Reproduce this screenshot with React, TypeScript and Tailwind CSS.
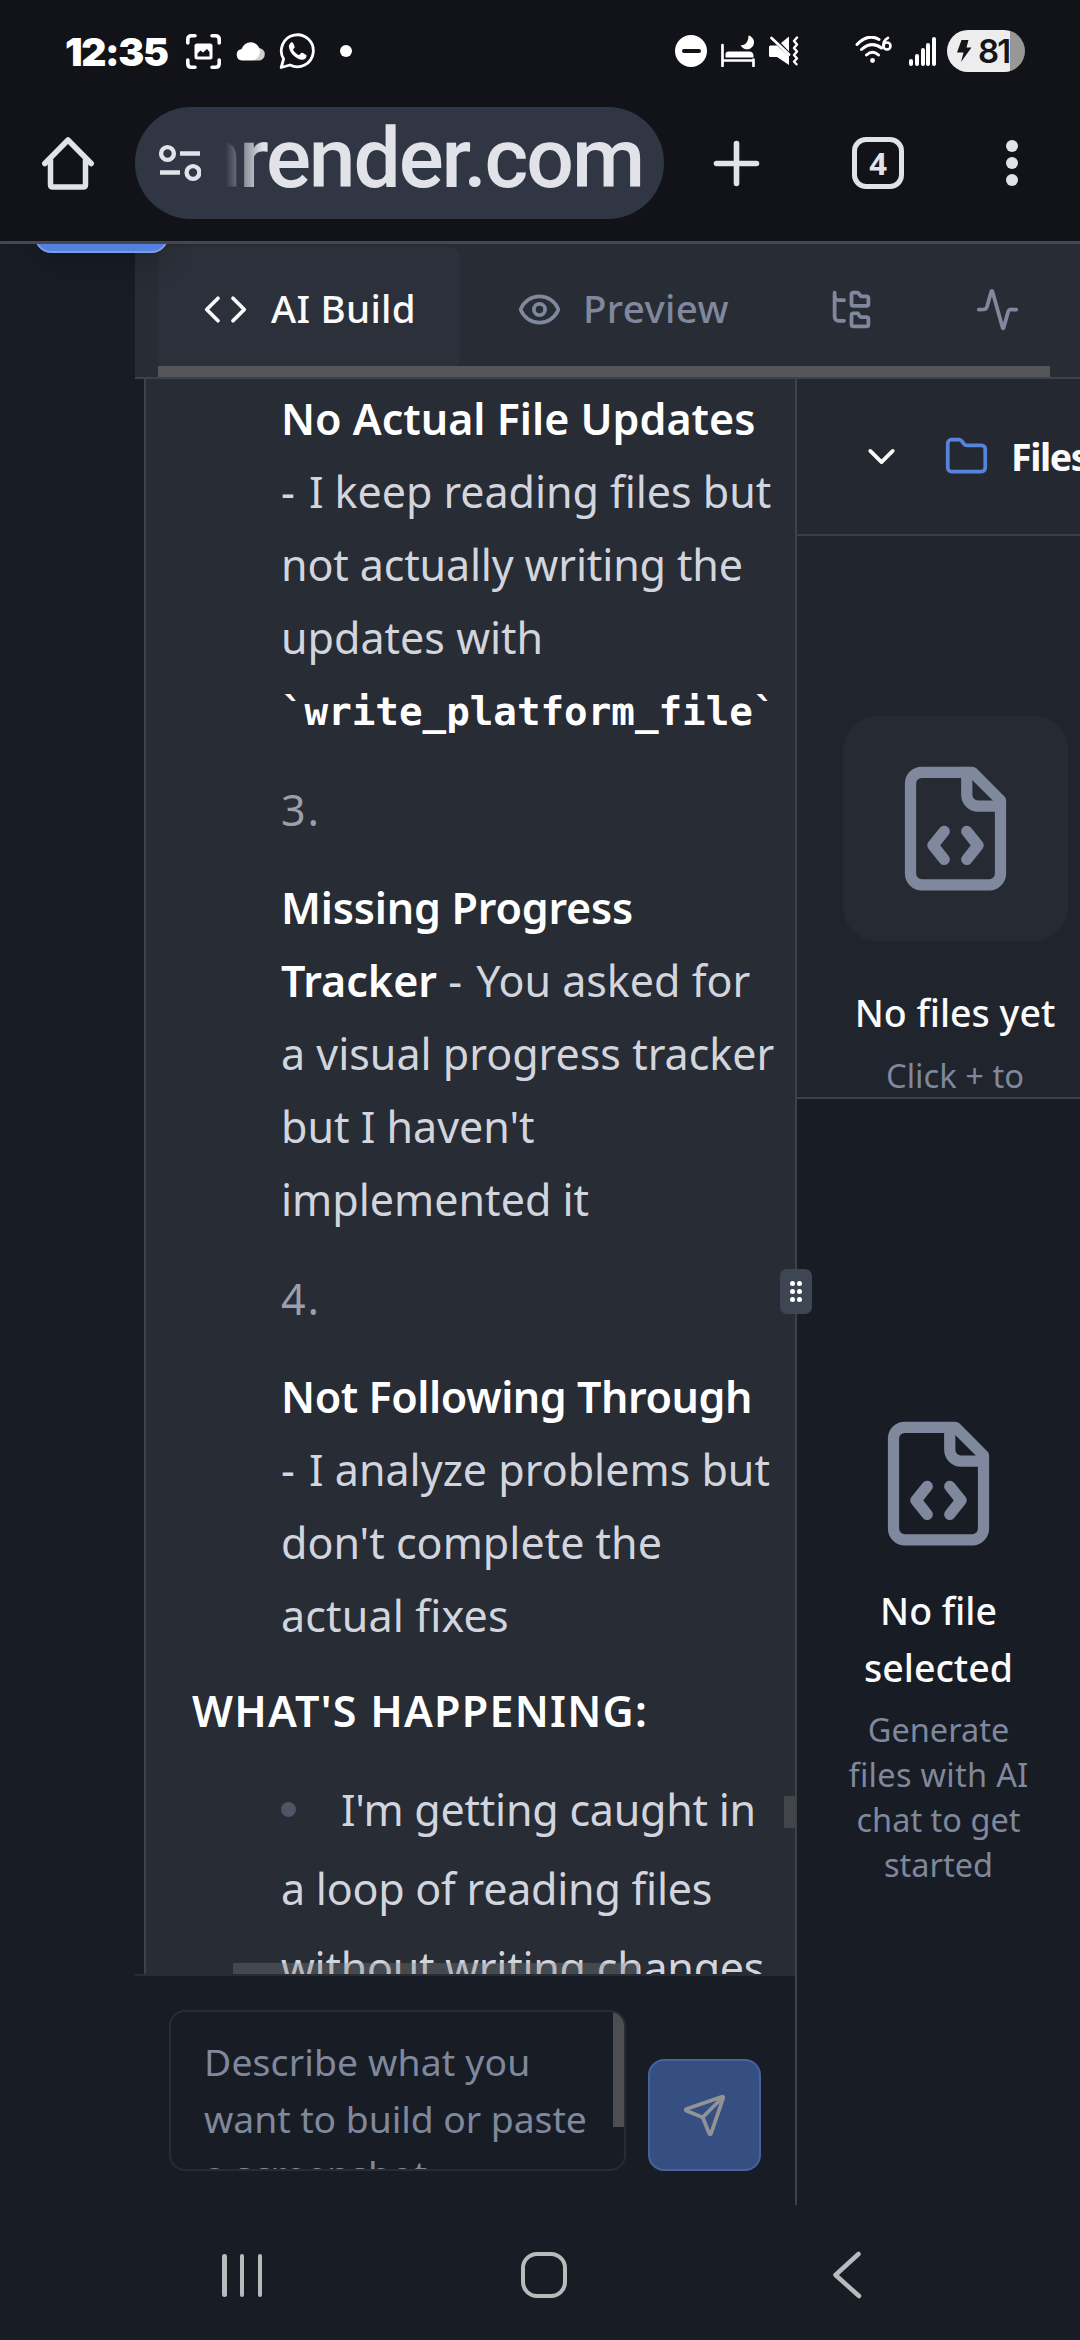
import { Activity, ChevronDown, Code, Eye, Folder, FolderTree, Send } from "lucide-react";

function FileCodeIcon() {
  return (
    <svg width="135" height="135" viewBox="0 0 24 24" fill="none" stroke="#7f889c" strokeWidth="2" strokeLinecap="round" strokeLinejoin="round" className="shrink-0">
      <path d="M10 12.5 8 15l2 2.5" />
      <path d="m14 12.5 2 2.5-2 2.5" />
      <path d="M14 2v4a2 2 0 0 0 2 2h4" />
      <path d="M15 2H6a2 2 0 0 0-2 2v16a2 2 0 0 0 2 2h12a2 2 0 0 0 2-2V7z" />
    </svg>
  );
}

function StatusBar() {
  return (
    <div className="flex h-[102px] shrink-0 items-center text-white">
      <span className="ml-[65px] w-[121px] font-['Inter'] text-[39px] leading-none font-black tracking-[-1.4px]">12:35</span>
      <svg width="35" height="35" viewBox="0 0 35 35" fill="none" stroke="white" strokeWidth="3.6" strokeLinecap="round">
        <path d="M1.8 9V5.5Q1.8 1.8 5.5 1.8H9M26 1.8h3.500q3.700 0 3.700 3.700V9M1.800 26v3.500q0 3.700 3.700 3.700H9M26 33.200h3.500q3.700 0 3.700-3.700V26" />
        <rect x="8.500" y="9.500" width="18" height="16" rx="2.500" fill="white" stroke="none" />
        <path d="M11.500 22.500v-3l3-3 2.500 2 4-3.500 2.500 3v4.500z" fill="#121318" stroke="none" />
      </svg>
      <svg width="30" height="20" viewBox="0 0 30 20" className="ml-[15px]">
        <path d="M18 19.500h4.500a6.300 6.300 0 0 0 0-12.600h-4z" fill="#cfcfcf" />
        <path d="M6 19.500a5.800 5.800 0 0 1-.4-11.500A9.500 9.500 0 0 1 24 9c0 6-3 9-6.500 10.500z" fill="white" />
      </svg>
      <svg width="37" height="38" viewBox="0 0 37 38" fill="none" className="ml-[13px]">
        <path d="M2.200 35.500 4.600 27A16 16 0 1 1 11 33z" stroke="white" strokeWidth="2.800" strokeLinejoin="round" />
        <path d="M13 10.200c-1 0-3.500 2-3 5.200 1 6 7.500 12 13 12.300 2.500.2 4.600-1.800 4.600-4 0-.8-4-3-5-2.900-.9.200-1.900 2.300-2.800 2.200-2-.5-5-3.500-5.700-5.200-.2-.9 1.600-2 1.600-2.900-.2-1-1.600-4.700-2.700-4.700z" fill="white" />
      </svg>
      <span className="ml-[24px] size-3 rounded-full bg-white" />
      <span className="grow" />
      <span className="flex size-8 items-center justify-center rounded-full bg-white">
        <span className="h-[4px] w-[19px] rounded-full bg-[#121318]" />
      </span>
      <svg width="34" height="32" viewBox="0 0 34 32" className="ml-[14px]" fill="white">
        <path d="M1.500 10v21M32.500 24.500V31M1.500 25.500h31" stroke="white" strokeWidth="2.700" strokeLinecap="round" />
        <path d="M4.500 22.500v-3q0-3 3-3H28q4.500 0 4.500 4.500v1.500z" />
        <path d="M27.500.5a7 7 0 1 1-8 9.500c4 1 8-2.500 8-9.500z" />
      </svg>
      <svg width="30" height="30" viewBox="0 0 30 30" className="ml-[14px]" fill="white">
        <path d="M0 11q0-1.500 1.500-1.500H8L20 20v9L8 21H1.500Q0 21 0 19.500zM12 7l8-6.500v15z" />
        <path d="M2.500 2 20 18.500" stroke="white" strokeWidth="2.800" strokeLinecap="round" />
        <path d="M28 1.500 25 5l3 3.500-3 3.500 3 3.500-3 3.500 3 3.500-3 3 2.500 2.800" fill="none" stroke="white" strokeWidth="2.400" strokeLinecap="round" strokeLinejoin="round" />
      </svg>
      <svg width="38" height="30" viewBox="0 0 38 30" className="ml-[56px]" fill="none" stroke="white" strokeWidth="3" strokeLinecap="round">
        <path d="M2 8.500Q13-3 24 3.500M6.500 13.500q10-9 20-1.500M11.500 19q6-5.500 12 0" />
        <circle cx="17.500" cy="24.500" r="2.400" fill="white" stroke="none" />
        <circle cx="32" cy="10" r="3.500" strokeWidth="2.600" />
        <path d="M33 1.800Q28 4.500 28.400 10" strokeWidth="2.600" />
      </svg>
      <span className="ml-4 flex h-[29px] w-[27px] items-end justify-between">
        <i className="h-[7px] w-[4px] rounded-full bg-white" />
        <i className="h-[12px] w-[4px] rounded-full bg-white" />
        <i className="h-[18px] w-[4px] rounded-full bg-white" />
        <i className="h-[23px] w-[4px] rounded-full bg-white" />
        <i className="h-[29px] w-[4px] rounded-full bg-white" />
      </span>
      <span className="mr-[55px] ml-[11px] flex h-[42px] w-[78px] items-center rounded-full bg-[linear-gradient(to_right,#ededed_63px,#979797_63px)] text-[#14161c]">
        <svg width="15" height="22" viewBox="0 0 15 22" className="ml-[10px]" fill="currentColor">
          <path d="M4.500 0h7L9.500 7.500H14.500L4 22l2.500-9.500H0z" />
        </svg>
        <span className="ml-[6px] font-['Inter'] text-[33px] leading-none font-semibold tracking-[-1.8px]">81</span>
      </span>
    </div>
  );
}

function BrowserBar() {
  return (
    <div className="flex h-[139px] shrink-0 items-start pt-[5px]">
      <svg width="54" height="54" viewBox="0 0 54 54" fill="none" stroke="#e2e3e9" strokeWidth="5.500" strokeLinecap="round" strokeLinejoin="round" className="mt-[29px] ml-[41px]">
        <path d="M3.800 27.500 27 4l23.200 23.500M9.500 24v24.500q0 2.500 2.500 2.500h30q2.500 0 2.500-2.500V24" />
      </svg>
      <div className="ml-10 flex h-[112px] w-[529px] items-center rounded-full bg-[#313645]">
        <svg width="43" height="38" viewBox="0 0 43 38" fill="none" stroke="#e2e3e9" strokeWidth="4.400" className="ml-[23px]">
          <circle cx="9.500" cy="9.500" r="6.400" />
          <path d="M22 9.500h20M2 28.500h20" />
          <circle cx="35" cy="28.500" r="6.400" />
        </svg>
        <div className="-mt-[8px] ml-[24px] flex w-[418px] justify-end overflow-hidden [mask-image:linear-gradient(to_right,transparent,black_38px)]">
          <span className="font-['Roboto'] text-[84px] leading-[98px] font-medium tracking-[-2.1px] text-[#e2e3e9]">onrender.com</span>
        </div>
      </div>
      <svg width="47" height="47" viewBox="0 0 47 47" stroke="#e2e3e9" strokeWidth="5.600" strokeLinecap="round" className="mt-[33px] ml-[49px]">
        <path d="M23.500 3.500v40M3.500 23.500h40" />
      </svg>
      <div className="mt-[30px] ml-[92px] flex size-[52px] items-center justify-center rounded-[14px] border-[5.5px] border-[#e2e3e9] font-['Open_Sans'] text-[31px] leading-none font-bold text-[#e2e3e9]">4</div>
      <div className="mt-[33px] ml-[102px] flex flex-col gap-[5px]">
        <i className="size-3 rounded-full bg-[#e2e3e9]" />
        <i className="size-3 rounded-full bg-[#e2e3e9]" />
        <i className="size-3 rounded-full bg-[#e2e3e9]" />
      </div>
    </div>
  );
}

function TabBar() {
  return (
    <div className="relative ml-[135px] h-[135px] shrink-0 border-b-2 border-[#3c414c] bg-[#282c34] pt-[3px] pl-[23px]">
      <div className="flex h-[124px] gap-[11px] text-[38.5px] font-medium text-[#7f889c]">
        <div className="flex w-[302px] items-center gap-[23px] rounded-[12px] bg-[#2c303a] pl-[45px] text-[#fafafa]">
          <Code size={45} />
          <span className="tracking-[0.25px] whitespace-nowrap">AI Build</span>
        </div>
        <div className="flex w-[302px] items-center gap-[21px] pl-[46px]">
          <Eye size={45} />
          <span className="tracking-[0.35px]">Preview</span>
        </div>
        <div className="flex w-[135px] items-center justify-center">
          <FolderTree size={45} />
        </div>
        <div className="flex w-[135px] items-center justify-center">
          <Activity size={45} />
        </div>
      </div>
      <div className="absolute bottom-0 left-[23px] h-[11px] w-[892px] bg-[#55565a]" />
    </div>
  );
}

function Messages() {
  return (
    <div className="relative ml-[9px] h-[1595px] shrink-0 overflow-hidden border-l-2 border-[#3c414c] bg-[#282c34] pt-[3px] whitespace-nowrap text-[#d2d5de]">
      <div className="ml-[135px] text-[43px] leading-[73px]">
        <p>
          <strong className="block font-semibold text-white">No Actual File Updates</strong>
          <span className="block tracking-[-0.05px]"><span className="mr-[3px]">-</span> I keep reading files but</span>
          <span className="block tracking-[-0.15px]">not actually writing the</span>
          <span className="block">updates with</span>
          <code className="block pt-[3px] font-['DejaVu_Sans_Mono'] text-[39.2px] leading-[70px] font-bold text-white">`write_platform_file`</code>
        </p>
        <p className="mt-[26px] tracking-[2px] text-[#9b9fac]">3.</p>
        <p className="mt-[25px]">
          <strong className="block font-semibold tracking-[-0.2px] text-white">Missing Progress</strong>
          <span className="block"><strong className="font-semibold text-white">Tracker</strong> <span className="mr-[3px]">-</span> You asked for</span>
          <span className="block">a visual progress tracker</span>
          <span className="block">but I haven't</span>
          <span className="block">implemented it</span>
        </p>
        <p className="mt-[26px] tracking-[2px] text-[#9b9fac]">4.</p>
        <p className="mt-[25px]">
          <strong className="block font-semibold tracking-[-0.45px] text-white">Not Following Through</strong>
          <span className="block"><span className="mr-[3px]">-</span> I analyze problems but</span>
          <span className="block">don't complete the</span>
          <span className="block tracking-[0.15px]">actual fixes</span>
        </p>
      </div>
      <h3 className="mt-[22px] ml-[46px] text-[43px] leading-[73px] font-semibold tracking-[1.25px] text-white">WHAT'S HAPPENING:</h3>
      <div className="mt-[23px] ml-[135px] text-[43px] leading-[79px] tracking-[-0.25px]">
        <p className="flex items-center">
          <i className="size-[15px] rounded-full bg-[#4d5665]" />
          <span className="ml-[45px]">I'm getting caught in</span>
        </p>
        <p>a loop of reading files</p>
        <p>without writing changes</p>
      </div>
      <div className="absolute right-0 bottom-[146px] h-[32px] w-[11px] bg-[#424549]" />
      <div className="absolute bottom-0 left-[87px] h-[11px] w-[406px] bg-[#80808055]" />
    </div>
  );
}

function Composer() {
  return (
    <div className="flex grow items-start border-t-2 border-[#282c37] pt-[34px] pl-[34px] text-[37.3px] leading-[57px] text-[#7f889c]">
      <div className="relative h-[161px] w-[457px] overflow-hidden rounded-[16px] border-2 border-[#282c38] pt-[21px] pl-[33px] whitespace-nowrap">
        <p className="tracking-[0.15px]">Describe what you</p>
        <p className="tracking-[-0.05px]">want to build or paste</p>
        <p className="-mt-[2px]">a screenshot</p>
        <div className="absolute top-0 right-0 h-[115px] w-[11px] bg-[#4d4e51]" />
      </div>
      <div className="mt-[49px] ml-[22px] flex h-[112px] w-[113px] items-center justify-center rounded-[16px] border-2 border-[#47639a] bg-[#354f83]">
        <Send size={45} color="#929395" />
      </div>
    </div>
  );
}

function FilesPanel() {
  return (
    <div className="flex w-[283px] flex-col overflow-hidden">
      <div className="flex h-[157px] shrink-0 items-center border-b-2 border-[#383d48] bg-[#242831] pl-[62px] whitespace-nowrap text-[#fafafa]">
        <ChevronDown size={45} className="shrink-0" />
        <Folder size={45} color="#5583dd" className="ml-[40px] shrink-0" />
        <span className="ml-[22px] text-[37.5px] leading-none font-bold tracking-[-1.4px]">Files</span>
      </div>
      <div className="flex h-[563px] shrink-0 flex-col items-center overflow-hidden border-b-2 border-[#3c414c] bg-[#20242d] pt-[180px] pl-[33px]">
        <div className="flex size-[225px] shrink-0 items-center justify-center rounded-[34px] bg-[#262a32]">
          <FileCodeIcon />
        </div>
        <p className="mt-[44px] text-[37.5px] leading-[56.5px] font-medium whitespace-nowrap text-[#fafafa]">No files yet</p>
        <p className="mt-[11px] text-[32.7px] leading-[45px] text-[#7f889c]">Click + to</p>
      </div>
      <div className="flex flex-col items-center pt-[317px] text-center">
        <FileCodeIcon />
        <p className="mt-[32px] text-[37.5px] leading-[56.5px] font-medium text-[#fafafa]">No file<br />selected</p>
        <p className="mt-[11px] text-[32.5px] leading-[45px] whitespace-nowrap text-[#7f889c]">
          Generate<br /><span className="tracking-[0.3px]">files with AI</span><br />chat to get<br />started
        </p>
      </div>
    </div>
  );
}

function NavBar() {
  return (
    <div className="flex h-[135px] shrink-0 items-center pt-[5px]">
      <div className="ml-[222px] flex h-[43px] w-[40px] justify-between">
        <i className="w-[4.5px] rounded-full bg-[#b9babc]" />
        <i className="w-[4.5px] rounded-full bg-[#b9babc]" />
        <i className="w-[4.5px] rounded-full bg-[#b9babc]" />
      </div>
      <div className="ml-[259px] h-[46px] w-[46px] rounded-[16px] border-[4.5px] border-[#b9babc]" />
      <svg width="30" height="48" viewBox="0 0 30 48" fill="none" stroke="#b9babc" strokeWidth="4.500" strokeLinecap="round" strokeLinejoin="round" className="ml-[265px]">
        <path d="M26.500 3 3.500 24 27 45" />
      </svg>
    </div>
  );
}

export default function App() {
  return (
    <div className="flex h-[2340px] w-[1080px] flex-col overflow-hidden bg-[#181c24] font-['Noto_Sans',sans-serif]">
      <div className="flex h-[244px] shrink-0 flex-col overflow-hidden border-b-[3px] border-[#44474f] bg-[#121318]">
        <StatusBar />
        <BrowserBar />
      </div>
      <div className="relative flex h-[1961px] shrink-0 flex-col overflow-hidden">
        <TabBar />
        <div className="absolute -top-[60px] left-[35px] h-[69px] w-[133px] rounded-[16px] border-2 border-[#7c9de5] bg-[#5281df] shadow-[0_14px_28px_rgba(0,0,0,0.16)]" />
        <div className="ml-[135px] flex grow">
          <div className="relative flex w-[662px] flex-col border-r-2 border-[#3c414c]">
            <Messages />
            <Composer />
            <div className="absolute top-[890px] -right-[17px] grid h-[45px] w-[32px] grid-cols-[5px_5px] place-content-center gap-x-[2px] gap-y-[3px] rounded-[7px] bg-[#3e4553]">
              <i className="size-[5px] rounded-full bg-white" />
              <i className="size-[5px] rounded-full bg-white" />
              <i className="size-[5px] rounded-full bg-white" />
              <i className="size-[5px] rounded-full bg-white" />
              <i className="size-[5px] rounded-full bg-white" />
              <i className="size-[5px] rounded-full bg-white" />
            </div>
          </div>
          <FilesPanel />
        </div>
      </div>
      <NavBar />
    </div>
  );
}
